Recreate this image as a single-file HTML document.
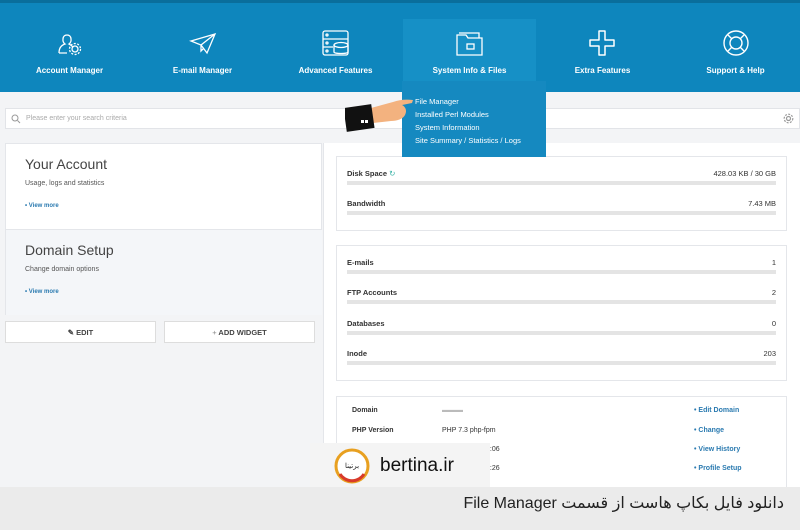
<!DOCTYPE html>
<html><head><meta charset="utf-8"><style>
*{margin:0;padding:0;box-sizing:border-box}
body{width:800px;height:530px;overflow:hidden;background:#f3f4f6;font-family:"Liberation Sans",sans-serif;position:relative;color:#333}
.hdr{position:absolute;left:0;top:0;width:800px;height:92px;background:#0e86bd;border-top:3px solid #0a6e9c}
.tab{position:absolute;top:0;width:133px;height:92px;text-align:center;color:#fff;font-size:8px;font-weight:bold}
.tab svg{position:absolute;left:50%;margin-left:-15px;top:26px}
.tab span{position:absolute;left:0;right:0;top:63px}
.sel{position:absolute;left:403px;top:16px;width:133px;height:66px;background:#1690c6}
.dd{position:absolute;z-index:5;left:402px;top:81px;width:144px;height:76px;background:#1589c0;color:#fff;font-size:7.5px;padding:14px 0 0 13px;line-height:13px}
.search{position:absolute;left:5px;top:108px;width:795px;height:21px;background:#fff;border:1px solid #e2e4e8;font-size:7px;color:#aaa;padding:6px 0 0 20px}
.lp{position:absolute;left:5px;top:143px;width:317px;height:172px;background:#fff;border:1px solid #e4e6ea}
.blk{position:absolute;left:0;width:316px;height:86px;padding:12px 0 0 19px}
.blk h2{font-weight:normal;font-size:14px;color:#444}
.blk p{font-size:7px;color:#555;margin-top:8px}
.blk a{display:block;font-size:6px;color:#2a7ab0;font-weight:bold;margin-top:16px}
.btn{position:absolute;top:321px;height:22px;background:#fff;border:1px solid #ddd;font-size:7.5px;font-weight:bold;color:#444;text-align:center;line-height:21px}
.rp{position:absolute;left:323px;top:143px;width:477px;height:344px;background:#fff;border-left:1px solid #e4e6ea}
.card{position:absolute;left:336px;width:451px;background:#fff;border:1px solid #e4e6ea}
.row{position:absolute;left:10px;right:10px;font-size:7.5px;font-weight:bold;color:#333}
.row b{position:absolute;right:0;top:0;font-weight:normal}
.bar{position:absolute;left:0;right:0;top:12px;height:4px;background:#e4e4e4}
.dr{position:absolute;font-size:7px;color:#333}
.lnk{position:absolute;left:694px;font-size:7px;color:#2a7ab0;font-weight:bold}
.cap{position:absolute;left:0;top:487px;width:800px;height:43px;background:#ebebeb;font-size:16px;color:#222;direction:rtl;text-align:right;padding:6px 16px 0 0;font-family:"Liberation Sans","DejaVu Sans",sans-serif}
.logo{position:absolute;z-index:6;left:310px;top:443px;width:180px;height:44px;background:#f4f4f4;font-size:19px;color:#111;padding:12px 0 0 70px}
</style></head><body>
<div class="hdr">
<div class="sel"></div>
<div class="tab" style="left:3px"><svg width="30" height="28" viewBox="0 0 30 28" fill="none" stroke="#fff" stroke-width="1.3"><path d="M4 24c0-6 3-8 6-9-3-2-3-9 2-9s5 7 2 9c2 1 3 2 4 3M12 24H4"/><circle cx="20" cy="20" r="3"/><circle cx="20" cy="20" r="5.5" stroke-dasharray="2 1.5"/></svg><span>Account Manager</span></div>
<div class="tab" style="left:136px"><svg width="30" height="28" viewBox="0 0 30 28" fill="none" stroke="#fff" stroke-width="1.3"><path d="M3 12L27 5 19 24 13 16zM13 16l14-11M13 16v6l3-3"/></svg><span>E-mail Manager</span></div>
<div class="tab" style="left:269px"><svg width="30" height="28" viewBox="0 0 30 28" fill="none" stroke="#fff" stroke-width="1.3"><rect x="2" y="2" width="25" height="24" rx="2"/><path d="M2 10h25M2 18h10"/><ellipse cx="20" cy="16" rx="7" ry="2.5"/><path d="M13 16v7c0 2 14 2 14 0v-7"/><circle cx="6" cy="6" r="1"/><circle cx="6" cy="14" r="1"/><circle cx="6" cy="22" r="1"/></svg><span>Advanced Features</span></div>
<div class="tab" style="left:403px"><svg width="30" height="28" viewBox="0 0 30 28" fill="none" stroke="#fff" stroke-width="1.3"><path d="M2 6h9l2 3h14v17H2z"/><path d="M4 4h20v5"/><rect x="12" y="15" width="7" height="5"/></svg><span>System Info &amp; Files</span></div>
<div class="tab" style="left:536px"><svg width="30" height="28" viewBox="0 0 30 28" fill="none" stroke="#fff" stroke-width="1.5"><path d="M11 2h6v9h9v6h-9v9h-6v-9H2v-6h9z" stroke-linejoin="round"/></svg><span>Extra Features</span></div>
<div class="tab" style="left:669px"><svg width="30" height="28" viewBox="0 0 30 28" fill="none" stroke="#fff" stroke-width="1.4"><circle cx="15" cy="14" r="12"/><circle cx="15" cy="14" r="6"/><path d="M7 6l4 4M23 6l-4 4M7 22l4-4M23 22l-4-4"/></svg><span>Support &amp; Help</span></div>
</div>
<div class="search">Please enter your search criteria
<svg style="position:absolute;left:5px;top:5px" width="10" height="10" viewBox="0 0 10 10" fill="none" stroke="#999"><circle cx="4" cy="4" r="3"/><path d="M6.5 6.5L9 9"/></svg>
<svg style="position:absolute;right:5px;top:4px" width="11" height="11" viewBox="0 0 11 11" fill="none" stroke="#999" stroke-width="1.2"><circle cx="5.5" cy="5.5" r="2"/><circle cx="5.5" cy="5.5" r="4.3" stroke-dasharray="2 1.3"/></svg></div>
<div class="lp">
<div class="blk" style="top:0"><h2>Your Account</h2><p>Usage, logs and statistics</p><a>• View more</a></div>
<div class="blk" style="top:85px;background:#f4f6f9;border-top:1px solid #e4e6ea"><h2>Domain Setup</h2><p>Change domain options</p><a>• View more</a></div>
</div>
<div class="btn" style="left:5px;width:151px">✎ EDIT</div>
<div class="btn" style="left:164px;width:151px"><span style="font-weight:normal;color:#888">+</span> ADD WIDGET</div>
<div class="rp"></div>
<div class="dd">File Manager<br>Installed Perl Modules<br>System Information<br>Site Summary / Statistics / Logs</div>
<svg style="position:absolute;z-index:6;left:345px;top:92px" width="70" height="42" viewBox="0 0 70 42"><path d="M26 16l22-6c6-2 12-3 20-2l-1 3-10 2c4 2 5 6 3 10-2 4-8 6-14 6l-18 2z" fill="#f3b27f"/><rect x="0" y="14" width="28" height="24" fill="#111" transform="rotate(-8 14 26)"/><rect x="16" y="28" width="3" height="3" fill="#fff"/><rect x="20" y="28" width="3" height="3" fill="#fff"/></svg>
<div class="card" style="top:156px;height:75px">
<div class="row" style="top:12px">Disk Space <span style="color:#3cb4a8;font-weight:normal">↻</span><b>428.03 KB / 30 GB</b><div class="bar"></div></div>
<div class="row" style="top:42px">Bandwidth<b>7.43 MB</b><div class="bar"></div></div>
</div>
<div class="card" style="top:245px;height:136px">
<div class="row" style="top:12px">E-mails<b>1</b><div class="bar"></div></div>
<div class="row" style="top:42px">FTP Accounts<b>2</b><div class="bar"></div></div>
<div class="row" style="top:73px">Databases<b>0</b><div class="bar"></div></div>
<div class="row" style="top:103px">Inode<b>203</b><div class="bar"></div></div>
</div>
<div class="card" style="top:396px;height:100px"></div>
<div class="dr" style="left:352px;top:407px;font-weight:bold">Domain</div>
<div class="dr" style="left:442px;top:407px;color:#bbb">▬▬▬</div>
<div class="dr" style="left:352px;top:427px;font-weight:bold">PHP Version</div>
<div class="dr" style="left:442px;top:427px">PHP 7.3 php-fpm</div>
<div class="dr" style="left:486px;top:446px">6:06</div>
<div class="dr" style="left:486px;top:465px">1:26</div>
<div class="lnk" style="top:407px">• Edit Domain</div>
<div class="lnk" style="top:427px">• Change</div>
<div class="lnk" style="top:446px">• View History</div>
<div class="lnk" style="top:465px">• Profile Setup</div>
<div class="logo"><svg style="position:absolute;left:24px;top:5px" width="36" height="36" viewBox="0 0 36 36"><circle cx="18" cy="18" r="16" fill="#fff" stroke="#e8a020" stroke-width="3"/><path d="M6 26a14 14 0 0 0 24 0" stroke="#d83a2a" stroke-width="3" fill="none"/><text x="18" y="20" font-size="7" text-anchor="middle" fill="#222" font-family="Liberation Sans">برتینا</text></svg>bertina.ir</div>
<div class="cap">دانلود فایل بکاپ هاست از قسمت File Manager</div>
</body></html>
